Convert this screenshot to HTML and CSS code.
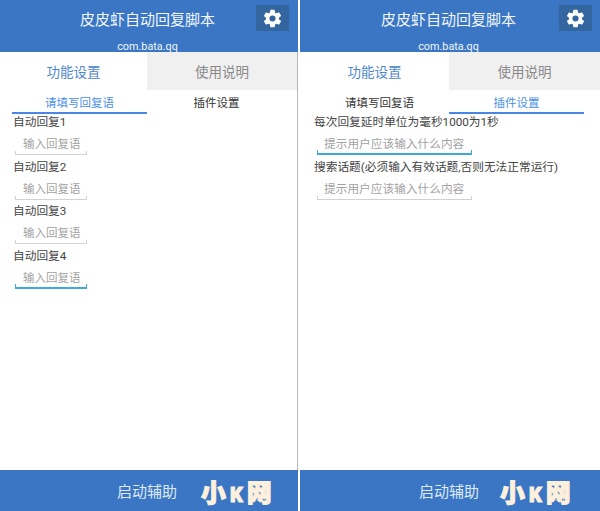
FILE: index.html
```html
<!DOCTYPE html>
<html lang="zh-CN">
<head>
  <meta charset="UTF-8" />
  <title>皮皮虾自动回复脚本</title>
  <link rel="stylesheet" href="styles.css">
</head>
<body>
  <div class="tela tela-esq">
    <div class="topo">
      <div class="topo-titulo">
        <span>皮皮虾自动回复脚本</span>
        <button class="btn-config">
          <svg viewBox="0 0 24 24" width="21" height="21"><path fill="#fff" d="M19.4 13c.05-.33.1-.66.1-1s-.05-.67-.1-1l2.1-1.65c.2-.15.25-.42.13-.64l-2-3.46c-.12-.22-.39-.3-.6-.22l-2.5 1c-.52-.4-1.08-.73-1.7-.98l-.37-2.65A.49.49 0 0 0 14 2h-4c-.25 0-.46.18-.5.42l-.37 2.65c-.62.25-1.18.59-1.7.98l-2.5-1c-.22-.08-.48 0-.6.22l-2 3.46c-.13.22-.07.49.12.64L4.57 11c-.05.33-.07.66-.07 1s.02.67.07 1l-2.11 1.65c-.19.15-.25.42-.12.64l2 3.46c.12.22.38.3.6.22l2.5-1c.52.4 1.08.73 1.7.98l.37 2.65c.04.24.25.42.5.42h4c.25 0 .46-.18.5-.42l.37-2.65c.62-.25 1.18-.59 1.7-.98l2.5 1c.22.08.48 0 .6-.22l2-3.46c.12-.22.07-.49-.13-.64L19.4 13zM12 15.5A3.5 3.5 0 1 1 12 8.5a3.5 3.5 0 0 1 0 7z"/></svg>
        </button>
      </div>
      <div class="topo-pacote">com.bata.qq</div>
    </div>
    <div class="abas">
      <div class="aba ativa">功能设置</div>
      <div class="aba">使用说明</div>
    </div>
    <div class="subabas">
      <div class="subaba ativa">请填写回复语</div>
      <div class="subaba">插件设置</div>
    </div>
    <div class="conteudo">
      <div class="rotulo">自动回复1</div>
      <div class="campo curto">输入回复语</div>
      <div class="rotulo">自动回复2</div>
      <div class="campo curto">输入回复语</div>
      <div class="rotulo">自动回复3</div>
      <div class="campo curto">输入回复语</div>
      <div class="rotulo">自动回复4</div>
      <div class="campo curto foco">输入回复语</div>
    </div>
    <div class="rodape"><span class="rodape-txt">启动辅助</span><span class="marca">小<span class="marca-k">K</span>网</span></div>
  </div>

  <div class="tela tela-dir">
    <div class="topo">
      <div class="topo-titulo">
        <span>皮皮虾自动回复脚本</span>
        <button class="btn-config">
          <svg viewBox="0 0 24 24" width="21" height="21"><path fill="#fff" d="M19.4 13c.05-.33.1-.66.1-1s-.05-.67-.1-1l2.1-1.65c.2-.15.25-.42.13-.64l-2-3.46c-.12-.22-.39-.3-.6-.22l-2.5 1c-.52-.4-1.08-.73-1.7-.98l-.37-2.65A.49.49 0 0 0 14 2h-4c-.25 0-.46.18-.5.42l-.37 2.65c-.62.25-1.18.59-1.7.98l-2.5-1c-.22-.08-.48 0-.6.22l-2 3.46c-.13.22-.07.49.12.64L4.57 11c-.05.33-.07.66-.07 1s.02.67.07 1l-2.11 1.65c-.19.15-.25.42-.12.64l2 3.46c.12.22.38.3.6.22l2.5-1c.52.4 1.08.73 1.7.98l.37 2.65c.04.24.25.42.5.42h4c.25 0 .46-.18.5-.42l.37-2.65c.62-.25 1.18-.59 1.7-.98l2.5 1c.22.08.48 0 .6-.22l2-3.46c.12-.22.07-.49-.13-.64L19.4 13zM12 15.5A3.5 3.5 0 1 1 12 8.5a3.5 3.5 0 0 1 0 7z"/></svg>
        </button>
      </div>
      <div class="topo-pacote">com.bata.qq</div>
    </div>
    <div class="abas">
      <div class="aba ativa">功能设置</div>
      <div class="aba">使用说明</div>
    </div>
    <div class="subabas">
      <div class="subaba">请填写回复语</div>
      <div class="subaba ativa">插件设置</div>
    </div>
    <div class="conteudo">
      <div class="rotulo">每次回复延时单位为毫秒1000为1秒</div>
      <div class="campo longo foco">提示用户应该输入什么内容</div>
      <div class="rotulo">搜索话题(必须输入有效话题,否则无法正常运行)</div>
      <div class="campo longo">提示用户应该输入什么内容</div>
    </div>
    <div class="rodape"><span class="rodape-txt">启动辅助</span><span class="marca">小<span class="marca-k">K</span>网</span></div>
  </div>
</body>
</html>
```

FILE: styles.css
```css
html, body {
  height: 100%;
}

body {
  margin: 0;
  display: flex;
  justify-content: space-between;
  background: #fff;
  font-family: "Roboto", "Noto Sans CJK SC", sans-serif;
  color: #444;
}

.tela {
  display: flex;
  flex-direction: column;
  height: 511px;
  overflow: hidden;
}

.tela-esq {
  width: 298px;
}

.tela-dir {
  width: 300px;
}

/* linha cinza entre as duas telas */
.tela-esq .abas,
.tela-esq .subabas,
.tela-esq .conteudo {
  border-right: 1px solid #b8b8b8;
}

.topo {
  height: 52px;
  background: #3a76c4;
  color: #f2f6fb;
  padding-right: 3px;
  box-sizing: border-box;
}

.topo-titulo {
  display: flex;
  align-items: center;
  justify-content: center;
  height: 37px;
  font-size: 15px;
  position: relative;
}

.btn-config {
  position: absolute;
  top: 5px;
  right: 6px;
  width: 33px;
  height: 26px;
  padding: 0;
  border: none;
  background: #33659f;
  display: flex;
  align-items: center;
  justify-content: center;
}

.tela-dir .btn-config {
  right: 5px;
}

.topo-pacote {
  margin-top: 3px;
  text-align: center;
  font-size: 10.8px;
  line-height: 14px;
}

.abas {
  display: flex;
  height: 38px;
}

.aba {
  flex: 1;
  display: flex;
  align-items: center;
  justify-content: center;
  font-size: 13.5px;
  color: #8a8a8a;
  background: #f0f0f0;
}

.aba.ativa {
  flex: 0 0 147px;
  color: #4f87cc;
  background: #fff;
}

.tela-dir .aba.ativa {
  flex-basis: 149px;
}

.subabas {
  display: flex;
  gap: 2px;
  padding-left: 12px;
  height: 24px;
}

.subaba {
  flex: 0 0 135px;
  box-sizing: border-box;
  text-align: center;
  font-size: 11.5px;
  line-height: 27px;
  color: #333;
}

.subaba.ativa {
  color: #4a90e8;
  border-bottom: 2px solid #4a86e8;
}

.conteudo {
  flex: 1;
  padding-left: 13px;
}

.tela-dir .conteudo {
  padding-left: 14px;
}

.rotulo {
  font-size: 11.7px;
  line-height: 17px;
  color: #444;
}

.campo {
  box-sizing: border-box;
  position: relative;
  height: 24px;
  margin: 0 0 3.5px 2px;
  padding-left: 8px;
  font-size: 11.5px;
  line-height: 26.5px;
  color: #a3a3a3;
  border-bottom: 1px solid #d2d2d2;
}

/* tracinhos nas pontas, como o EditText do android */
.campo::after {
  content: "";
  position: absolute;
  left: 0;
  right: 0;
  bottom: 0;
  height: 3px;
  border-left: 1px solid #d2d2d2;
  border-right: 1px solid #d2d2d2;
}

.campo.curto {
  width: 72px;
}

.campo.longo {
  width: 155px;
  margin-left: 3px;
  padding-left: 7px;
  font-size: 11.7px;
}

.campo.foco {
  border-bottom: 2px solid #3eaad6;
}

.campo.foco::after {
  border-color: #3eaad6;
}

.rodape {
  height: 41px;
  background: #3a76c4;
  display: flex;
  align-items: center;
  color: #dfe9f6;
  font-size: 15px;
  padding-left: 117px;
}

.tela-dir .rodape {
  padding-left: 119px;
}

.marca {
  margin-left: 24px;
  font-size: 25px;
  font-weight: 900;
  color: #fdf0dc;
  -webkit-text-stroke: 1px #fdf0dc;
  letter-spacing: 4px;
  white-space: nowrap;
}

.marca-k {
  font-size: 20px;
}

.tela-dir .marca {
  margin-left: 21px;
}
```
